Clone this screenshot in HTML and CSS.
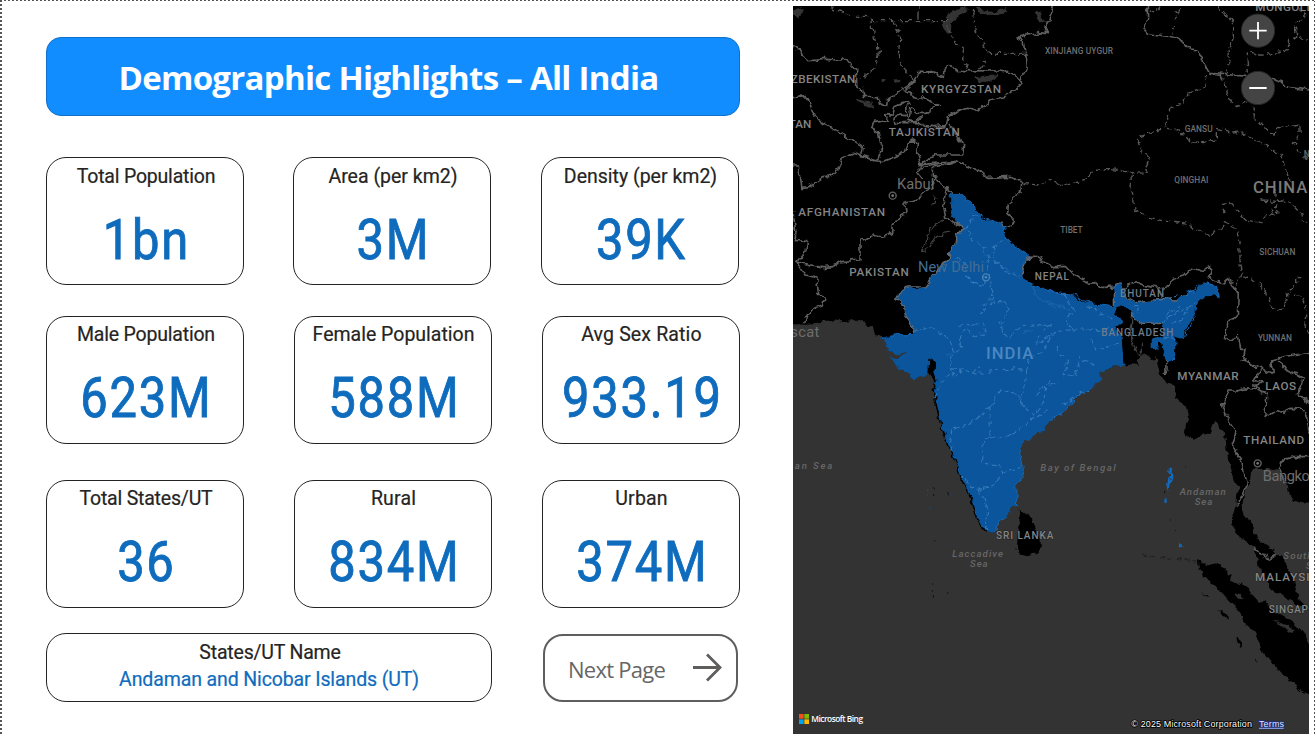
FILE: index.html
```html
<!DOCTYPE html>
<html lang="en">
<head>
<meta charset="utf-8">
<title>Demographic Highlights – All India</title>
<link rel="stylesheet" href="styles.css">
</head>
<body>
<main class="report">
  <section class="summary">
    <h1 class="banner">Demographic Highlights – All India</h1>
    <div class="row row-first">
      <article class="card"><h2 class="label tight">Total Population</h2><p class="value">1bn</p></article>
      <article class="card"><h2 class="label">Area (per km2)</h2><p class="value">3M</p></article>
      <article class="card"><h2 class="label">Density (per km2)</h2><p class="value">39K</p></article>
    </div>
    <div class="row row-second">
      <article class="card"><h2 class="label tight">Male Population</h2><p class="value">623M</p></article>
      <article class="card"><h2 class="label">Female Population</h2><p class="value">588M</p></article>
      <article class="card"><h2 class="label loose">Avg Sex Ratio</h2><p class="value">933.19</p></article>
    </div>
    <div class="row row-third">
      <article class="card"><h2 class="label tight">Total States/UT</h2><p class="value">36</p></article>
      <article class="card"><h2 class="label loose">Rural</h2><p class="value">834M</p></article>
      <article class="card"><h2 class="label loose">Urban</h2><p class="value">374M</p></article>
    </div>
    <div class="row row-last">
      <article class="card name-card"><h2 class="label tight">States/UT Name</h2><p class="state-name">Andaman and Nicobar Islands (UT)</p></article>
      <button class="next"><span class="next-text">Next Page</span>
        <svg class="arrow" width="30" height="30" viewBox="0 0 30 30"><path d="M1 14.500H28M15 1.500L28 14.500L15 27.500"/></svg>
      </button>
    </div>
  </section>
  <section class="map">
    <svg class="map-canvas" width="516" height="728" viewBox="9 18 1548 2184">
      <defs>
        <filter id="coast" filterUnits="userSpaceOnUse" x="-40" y="-40" width="1660" height="2300" color-interpolation-filters="sRGB">
          <feTurbulence type="fractalNoise" baseFrequency="0.045" numOctaves="2" seed="4"/>
          <feDisplacementMap in="SourceGraphic" scale="22" xChannelSelector="R" yChannelSelector="G"/>
        </filter>
      </defs>
      <g class="terrain" filter="url(#coast)">
      <rect class="land" x="-40" y="-40" width="1660" height="2300"/>
      <path class="sea" d="M-40 970L50 974L80 972L120 960L150 964L200 960L215 954L228 972L250 980L255 1005L285 1012L380 1060L560 1320L800 1180L940 1105L980 1098L1005 1100L1020 1092L1040 1094L1055 1068L1072 1060L1082 1080L1100 1075L1110 1125L1125 1135L1130 1150L1155 1160L1158 1190L1168 1205L1180 1205L1190 1230L1194 1255L1187 1275L1185 1315L1205 1310L1222 1317L1260 1295L1268 1275L1280 1266L1288 1285L1304 1290L1310 1350L1325 1410L1333 1450L1345 1460L1340 1505L1325 1560L1328 1590L1360 1620L1395 1648L1402 1690L1425 1730L1435 1765L1475 1785L1557 1830H1620V2260H-40Z"/>
      <path class="sea" d="M1390 1406L1450 1412L1475 1410L1488 1440L1493 1475L1510 1500L1530 1506L1620 1512V1835L1560 1835L1530 1800L1518 1770L1510 1730L1488 1690L1465 1665L1445 1648L1410 1625L1395 1600L1385 1560L1362 1555L1356 1520L1362 1490L1380 1450L1382 1420Z"/>
      <path class="land" d="M1221 1684L1250 1692L1295 1696L1325 1727L1323 1739L1355 1752L1390 1782L1405 1805L1425 1802L1440 1825L1470 1842L1500 1855L1515 1873L1540 1895L1560 1940H1600V2100L1540 2075L1520 2057L1470 2017L1435 1975L1420 1957L1412 1930L1390 1897L1360 1867L1352 1840L1340 1822L1310 1797L1300 1782L1250 1737L1224 1707Z"/>
      <path class="land" d="M1235 1777L1262 1793L1245 1788ZM1284 1829L1298 1828L1313 1847L1312 1856L1302 1848ZM1340 1915L1346 1914L1359 1940L1350 1940L1340 1923ZM1395 1974L1402 1990L1396 1982Z"/>
      <path class="sea" d="M1335 1779L1355 1785L1360 1797L1345 1796ZM1445 1858L1490 1875L1515 1892L1505 1898L1465 1870ZM1530 1880L1540 1874L1545 1890L1535 1893Z"/>
      <path class="land" d="M682 1521L699 1535L710 1538L725 1562L738 1580L748 1608L750 1652L738 1662L712 1669L690 1663L681 1650L683 1610L686 1556L697 1544Z"/>
      <path class="lake" d="M552 234L570 229L628 221L612 238L590 249L567 245ZM455 78L475 40L510 22L535 27L500 50L484 70L483 95L470 98ZM560 24L620 35L650 22L658 28L628 46L600 44L570 40ZM735 40L750 34L765 70L745 62ZM195 300L245 308L256 325L230 314L195 305ZM10 30L35 22L42 30L22 52L10 45ZM278 237H286L284 246H278ZM310 238L322 234L333 244L320 250Z"/>

      <g class="border">
        <path d="M-10 131L20 145L57 182L110 178L150 180L163 173L195 212L200 212V258L216 262L222 292L265 293L268 312L290 320L292 300L370 245L385 218L425 215L460 232L462 208L478 199L510 212L635 213L664 219L690 236L695 254L640 293L600 302L568 333L533 322L510 330L475 350L470 377L430 380L400 376L395 368L315 368L312 355L330 342L345 344L350 315L360 310L355 302L315 320L308 345L285 344L295 362L255 367L245 382L265 397L272 430L280 440L268 464L263 480L215 466L220 440L150 398L73 352L55 300L48 290L-10 294"/>
        <path d="M378 240L343 275L365 281L362 290L395 298L402 290L445 316L410 340L380 340L360 325L352 360L378 366L400 348M-10 495H28L35 562L60 560L95 535L125 528L150 500L157 475L190 460L215 467L262 482L275 485L315 470L345 455L355 430L370 420L385 430L383 465L392 490L440 465L515 465L518 435L500 400L480 375M392 495L430 490L500 485L550 505L578 518L595 535L660 532L695 543L693 575L665 590L668 610L652 615L650 640L673 660L665 680L645 678L634 668"/>
        <path d="M395 540L380 520L392 505L450 490L500 485L470 495L430 500L430 525L445 545L460 560L495 585M792 10L780 60L762 85L775 98L745 95L685 112L703 125L712 200L698 228L695 254"/>
        <path d="M470 560L460 610L467 655L525 683L500 705L495 730M433 520L440 535L425 560L407 565L385 600L345 610L348 638L330 645L310 675L308 700L275 710L250 705L210 728V780L155 785L128 800L100 803L20 785M9 635L18 700L15 718L50 722L45 755L20 785L45 825L80 835L86 880L103 895L97 915L70 925L50 950L44 970"/>
        <path d="M692 790L715 768L740 770L790 800L830 800L850 822L895 850L920 848L935 862L978 861L990 852L1000 870L1035 845L1060 855L1100 865L1130 860L1150 835L1180 825L1200 805L1235 810L1255 800L1267 812L1258 835L1275 842L1300 848L1310 838L1325 850L1335 870L1345 880L1342 945L1315 970L1302 1010L1325 1020L1345 1010L1352 1048L1365 1048L1360 1080L1380 1090L1395 1106M1445 1110L1442 1080L1480 1070L1510 1065L1570 1055M1000 885L1035 905M1108 875L1120 895"/>
        <path d="M1130 1080L1131 1110L1125 1120M1355 1078L1390 1093L1415 1106L1395 1140L1415 1150L1400 1155L1400 1165L1355 1168L1338 1173L1318 1173L1295 1215L1305 1240L1340 1293L1325 1340L1355 1382L1373 1460L1338 1520M1390 1150L1410 1170L1430 1180L1428 1245L1425 1255L1460 1228L1485 1240L1500 1225L1535 1228L1550 1250L1557 1295M1465 1080L1485 1108L1520 1125L1540 1135L1525 1180L1570 1214M1570 1370H1510L1485 1378L1470 1403L1485 1450M1445 1080L1450 1120L1410 1105M1390 1645L1400 1650L1420 1660L1430 1680L1448 1670L1460 1660"/>
        <path d="M1072 10L1073 60L1062 85L1072 100L1150 112L1185 130L1200 147L1225 150L1240 185L1260 220L1325 225L1370 229L1430 232L1460 242L1500 260L1545 265L1570 275M790 10L785 40"/>
        <path class="river-line" d="M432 585L438 590L435 610L420 612M394 755L410 730L420 685L465 660M394 755L410 753L440 710L480 695M1025 960V1020L1050 1070L1060 1060V1030M1028 940L1025 965L1015 1010"/>
      </g>

      <g class="province">
        <path d="M120 20L180 48L240 50L250 100L268 160L255 205L210 235M245 62H483M384 10V62M305 62L330 100L325 170L340 205L370 240M553 30L550 70L570 115L600 160H710M470 80L490 120L520 150L518 180L540 210M570 210L585 190L580 180M700 550L740 555L785 540L800 550"/>
        <path d="M1080 25L1100 35L1110 20M1170 25L1155 50L1145 105M1280 22L1305 40L1330 70L1330 110L1315 150L1312 220M1368 155L1375 215M1380 155L1405 165L1440 165L1490 150L1500 120L1520 110L1515 80L1530 60L1548 38L1525 28M1520 85L1535 120H1557"/>
        <path d="M1250 225L1248 255L1230 270L1200 280L1180 310L1140 325L1130 370L1120 385L1050 410L1045 425L1055 450L1080 475L1065 500L1072 520L1030 518L960 508L910 515L895 535L820 555L780 540M1125 385L1160 390L1165 400L1190 402L1200 425L1240 428L1275 420L1282 410V385L1325 400L1350 395L1410 430L1470 460L1480 490L1490 520L1500 545M1290 225L1305 245L1315 295L1340 320L1375 305M1390 320L1388 350L1450 405L1465 385L1530 375L1530 400L1510 430L1525 455L1557 475"/>
        <path d="M1025 520L1020 560L1030 590L1035 630L1060 645L1120 660L1200 670L1225 695L1260 707L1290 690L1300 665L1335 680L1350 720L1350 780L1358 820L1340 855L1320 840M1302 640L1298 610L1320 607L1340 630L1370 660L1410 668L1435 640L1455 645L1440 630M1360 835L1380 830L1425 870L1440 920L1470 930L1490 900L1490 880L1520 850L1520 830L1540 830M1515 885L1540 890L1548 920L1545 980L1557 1000M1415 600L1470 605L1495 600L1535 640L1540 660L1565 672M1455 570V590L1470 610L1450 625L1465 640"/>
        <path class="faint" d="M1055 1665L1150 1677L1220 1686"/>
      </g>

      <path class="india-shore" d="M425 1080L428 1110L440 1145L432 1170L440 1210L455 1280L470 1325L495 1380L510 1430L540 1485L560 1550L575 1580L595 1595"/>
      <path class="india" d="M275 1020L295 1005L345 1002L372 1002L375 985L360 970L345 945L343 925L340 915L320 900L335 875L355 858L368 867L410 858L430 825L460 790L480 775L475 760L500 730L500 705L525 688L505 670L482 650L487 630L475 610L485 600L475 588L492 578L520 590L550 615L565 640L580 655L605 660L625 670L640 675L648 720L680 740L720 768L700 795L692 830L730 852L790 877L810 878L845 882L855 895L910 912L970 920L970 865L995 855L1000 885L1030 905L1110 898L1165 900L1190 875L1220 865L1240 848L1280 862L1288 892L1270 882L1245 892L1218 915L1217 945L1200 965L1190 985L1182 1020L1157 1010L1155 1060L1150 1080L1135 1088L1125 1070L1120 1030L1108 1028L1098 1052L1082 1040L1082 1020L1115 1005L1125 972L1035 965L1028 940L1025 928L985 922L972 940L1002 965L972 980L995 1015L1001 1098L992 1102L980 1098L950 1103L930 1115L934 1135L900 1170L860 1190L830 1230L780 1262L770 1275L765 1292L735 1298L718 1320L700 1317L690 1345L700 1405L695 1435L680 1460L683 1515L662 1520L655 1550L625 1570L615 1590L595 1595L575 1580L560 1550L540 1485L510 1430L495 1380L470 1325L455 1280L440 1210L432 1170L440 1145L430 1105L435 1082L422 1079L418 1115L400 1130L370 1138L345 1120L300 1075L325 1078L355 1055L318 1063L295 1050L285 1020Z"/>
      <path class="india-shore" d="M425 1082L433 1086L431 1105L423 1100ZM430 1120L439 1145"/>
      <path class="india-edge" d="M492 578L520 590L550 615L565 640L605 660L640 675L648 720L680 740L720 768M730 852L790 877L845 882L910 912L970 920M970 865L995 855M1190 875L1240 848L1280 862L1288 892M1217 945L1182 1020M1155 1060L1150 1080M295 1005H370M683 1515L680 1460L695 1435L700 1405L690 1345M615 1590L625 1570L655 1550M860 1190L830 1230L780 1262"/>
      <path class="india-rim" d="M372 1002L375 985L345 945L340 915L320 900L335 875L355 858L410 858L430 825L480 775L475 760L500 730L500 705L525 688L505 670M720 768L700 795L692 830M1035 905L1110 898L1165 900M1125 972L1035 965L1025 928M970 915V870"/>
      <path class="state" d="M525 688L540 670L545 650L575 645M530 690L560 725L585 755L600 770L590 790L600 830L605 870M585 750L610 735L640 725M610 735L615 785L650 815L690 830M500 775L525 785L530 830L560 855L580 860L585 825M565 945L605 910L650 905L655 940L630 970L635 1000L660 1010L695 980L780 975M605 870V900L570 920M375 990L420 985L470 1010L490 1050L480 1100L490 1130L520 1105L540 1120L570 1100M505 980L520 975L580 970L590 1000L555 1010L535 985L508 1010L512 1045L495 1060M535 830L570 860M480 1105L560 1122L625 1108L710 1110L720 1070L760 1050L790 1000L740 1035L745 1010L790 965M710 1110L705 1165L690 1210M430 1190L465 1135L490 1115M600 1220L630 1170L680 1180L695 1210L730 1245L765 1200L770 1160L800 1145M600 1220L560 1260L485 1290L480 1350M600 1220L600 1310L580 1320L578 1390L630 1395L635 1430L600 1460L565 1470L510 1430M600 1315L650 1310L700 1280L735 1250L780 1230M635 1420L690 1405M565 1470L580 1500L592 1530V1590M780 1000L830 990L900 990L960 985M800 1040L830 1080L820 1130L860 1120L870 1070L920 1100M820 880L850 930L830 960L850 995M900 1020L920 1050L980 1030M890 920L970 955M1030 920H1050L1028 950M1130 955L1190 925L1215 905M1120 970L1130 945L1140 930L1170 925M870 1180L900 1170M740 1190L780 1140M820 1215L870 1180M1120 1010L1155 1020M1145 970L1180 955L1195 930M1105 900L1180 885L1215 870"/>
      <path class="river" d="M725 850L740 890L775 907L800 925M640 800L690 835M780 905L840 930M495 1055L470 1065M700 1000L730 990"/>
      <path class="islands" d="M1143 1400L1140 1430M1139 1430L1133 1468M1127 1498L1126 1508M1171 1627L1174 1639"/>
      </g>
      <path class="atolls" d="M411 1470H415M480 1481L483 1484M419 1524H422M412 1485H414"/>
      <path class="islets" d="M430 1462L434 1468M431 1482V1488M473 1476L476 1486M434 1620V1624M430 1785V1793M427 1770V1775M473 1777V1782M426 1752H430M1185 1400H1188M1140 1560H1143M676 1645L680 1650M1124 1472V1480M1157 1590V1593"/>
      <g class="pin">
        <circle cx="308" cy="587" r="10.500"/><circle class="pin-dot" cx="308" cy="587" r="4"/>
        <circle cx="1403" cy="1390" r="10.500"/><circle class="pin-dot" cx="1403" cy="1390" r="4"/>
      </g>
      <g class="pin pin-blue"><circle cx="588" cy="832" r="10.500"/><circle class="pin-dot" cx="588" cy="832" r="4"/></g>

      <g class="country">
        <text x="-22" y="249" textLength="218">UZBEKISTAN</text>
        <text class="trail" x="64" y="384">TURKMENISTAN</text>
        <text x="393" y="279" textLength="240">KYRGYZSTAN</text>
        <text x="296" y="409" textLength="213">TAJIKISTAN</text>
        <text x="25" y="648" textLength="260">AFGHANISTAN</text>
        <text x="178" y="827" textLength="178">PAKISTAN</text>
        <text class="c-small" x="734" y="841" textLength="103">NEPAL</text>
        <text class="c-small c-blend" x="990" y="892" textLength="132">BHUTAN</text>
        <text class="c-small c-blend" x="934" y="1008" textLength="216">BANGLADESH</text>
        <text x="1162" y="1141" textLength="184">MYANMAR</text>
        <text x="1426" y="1171" textLength="92">LAOS</text>
        <text x="1360" y="1332" textLength="182">THAILAND</text>
        <text class="c-small" x="618" y="1616" textLength="172">SRI LANKA</text>
        <text x="1395" y="1743" textLength="190">MALAYSIA</text>
        <text class="c-small" x="1436" y="1838" textLength="180">SINGAPORE</text>
        <text x="1396" y="33" textLength="188">MONGOLIA</text>
      </g>
      <text class="china" x="1389" y="579" textLength="163">CHINA</text>
      <text class="india-text" x="588" y="1078" textLength="142">INDIA</text>
      <g class="region">
        <text x="765" y="162" textLength="204">XINJIANG UYGUR</text>
        <text x="1184" y="396" textLength="84">GANSU</text>
        <text x="1153" y="550" textLength="102">QINGHAI</text>
        <text x="811" y="698" textLength="67">TIBET</text>
        <text x="1408" y="765" textLength="108">SICHUAN</text>
        <text x="1404" y="1024" textLength="102">YUNNAN</text>
        <text x="1541" y="470">NINGXIA</text>
      </g>
      <g class="city">
        <text x="321" y="568" textLength="112">Kabul</text>
        <text class="trail" x="89" y="1012">Muscat</text>
        <text x="1418" y="1442" textLength="163">Bangkok</text>
        <text class="delhi" x="384" y="815" textLength="198">New Delhi</text>
      </g>
      <g class="water">
        <text x="-79" y="1406" textLength="206">Arabian Sea</text>
        <text x="751" y="1412" textLength="226">Bay of Bengal</text>
        <text x="1169" y="1485" textLength="138">Andaman</text>
        <text x="1214" y="1515" textLength="53">Sea</text>
        <text x="487" y="1670" textLength="152">Laccadive</text>
        <text x="540" y="1701" textLength="53">Sea</text>
        <text x="1480" y="1676" textLength="188">South China</text>
        <text x="1548" y="1707">Sea</text>
      </g>
      <g class="brand">
        <rect class="logo-red" x="27" y="2142" width="14" height="14"/><rect class="logo-green" x="43" y="2142" width="14" height="14"/>
        <rect class="logo-blue" x="27" y="2158" width="14" height="14"/><rect class="logo-yellow" x="43" y="2158" width="14" height="14"/>
        <text x="64" y="2166" textLength="155">Microsoft Bing</text>
      </g>
      <g class="credit">
        <text x="1024" y="2180" textLength="362">© 2025 Microsoft Corporation</text>
        <text class="terms" x="1407" y="2180" textLength="75">Terms</text>
        <path d="M1407 2185H1481"/>
      </g>
      <g class="zoom">
        <circle cx="1404" cy="92" r="50"/><circle cx="1404" cy="264" r="50"/>
        <path d="M1378 92H1430M1404 66V118M1378 264H1430"/>
      </g>
    </svg>
  </section>
</main>
</body>
</html>
```
FILE: styles.css
```css
* { box-sizing: border-box; }
html, body { margin: 0; height: 734px; overflow: hidden; background: #fff; }
h1, h2, p { margin: 0; font-weight: normal; }

.report {
  display: flex;
  width: 1315px;
  height: 734px;
  padding: 6px 6px 0 46px;
  justify-content: space-between;
  background:
    repeating-linear-gradient(90deg, #555 0 2px, #fff 2px 4px) 0 0 / 100% 1px no-repeat,
    repeating-linear-gradient(180deg, #555 0 2px, #fff 2px 4px) 0 0 / 2px 100% no-repeat,
    repeating-linear-gradient(180deg, #555 0 2px, #fff 2px 4px) 100% 0 / 1px 100% no-repeat,
    #fff;
}
.summary { width: 695px; padding-top: 31px; }

.banner {
  display: flex;
  align-items: center;
  justify-content: center;
  width: 694px;
  height: 79px;
  padding: 2px 9px 0 0;
  border: 1px solid #1070cb;
  border-radius: 15px;
  background: #118dff;
  color: #fff;
  font: 700 33px/40px "Open Sans", "Noto Sans", sans-serif;
  letter-spacing: -0.7px;
}

.row { display: flex; gap: 50px; }
.row-first { padding-top: 41px; gap: 49.5px; }
.row-second { padding-top: 31px; }
.row-third { padding-top: 36px; }
.row-last { padding-top: 25px; gap: 51px; }
.row .card:nth-child(2) { margin-left: -0.5px; }

.card {
  width: 198px;
  height: 128px;
  flex: none;
  padding-top: 7px;
  border: 1px solid #252423;
  border-radius: 20px;
  text-align: center;
  font-family: Roboto, sans-serif;
}
.label {
  padding-left: 2px;
  color: #252423;
  font-size: 19.5px;
  line-height: 23px;
  letter-spacing: 0;
  white-space: nowrap;
  -webkit-text-stroke: 0.2px #252423;
}
.row-second .label, .row-third .label { margin-top: -1px; margin-bottom: 1px; }
.tight { letter-spacing: -0.2px; }
.loose { letter-spacing: 0.15px; }
.value {
  margin-top: 20px;
  padding-left: 3px;
  color: #0f6cbd;
  font-size: 55px;
  line-height: 64px;
  letter-spacing: 1.9px;
  transform: scaleX(0.89);
  -webkit-text-stroke: 0.9px #0f6cbd;
}

.name-card { width: 446px; height: 69px; }
.state-name { margin-top: 4px; color: #0f6cbd; font-size: 19.5px; line-height: 23px; letter-spacing: -0.12px; -webkit-text-stroke: 0.2px #0f6cbd; }

.next {
  display: flex;
  align-items: center;
  justify-content: space-between;
  width: 195px;
  height: 68px;
  padding: 0 14px 0 23px;
  margin-top: 1px;
  border: 2px solid #605e5c;
  border-radius: 20px;
  background: #fff;
}
.next-text { padding-top: 1px; color: #666; font: 22px/30px "Open Sans", sans-serif; letter-spacing: -0.75px; white-space: nowrap; }
.arrow { fill: none; stroke: #605e5c; stroke-width: 2.8; }

.map { width: 516px; height: 728px; background: #333; }
.map-canvas { display: block; font-family: Roboto, sans-serif; }
.land { fill: #000; }
.sea, .lake { fill: #333; }
.border { fill: none; stroke: #606060; stroke-width: 4.8; stroke-linejoin: round; }
.river-line { stroke: #444; stroke-width: 3.5; }
.province { fill: none; stroke: #5a5a5a; stroke-width: 4; stroke-dasharray: 17 9; stroke-linejoin: round; }
.faint { stroke: #202020; stroke-width: 3; }
.india { fill: #0a559b; }
.india-shore { fill: none; stroke: #000; stroke-width: 8; }
.india-edge { fill: none; stroke: #1769b8; stroke-width: 3; }
.india-rim { fill: none; stroke: #646b72; stroke-width: 4; }
.state { fill: none; stroke: #3579b9; stroke-width: 3.4; stroke-dasharray: 15 8; stroke-linejoin: round; }
.river { fill: none; stroke: #1c66ab; stroke-width: 3; }
.islands { fill: none; stroke: #116bbf; stroke-width: 7; }
.atolls { fill: none; stroke: #11589b; stroke-width: 3; }
.islets { fill: none; stroke: #111; stroke-width: 3; }

.pin { fill: none; stroke: #666; stroke-width: 4; }
.pin-dot { fill: #777; stroke: none; }
.pin-blue { stroke: #4b83b5; }
.pin-blue .pin-dot { fill: #4b83b5; }

.country { fill: #858585; font-size: 35px; font-weight: 500; stroke: #000; stroke-width: 3; paint-order: stroke; stroke-opacity: 0.4; }
.c-small { font-size: 30px; }
.c-blend { fill: #6f7d8b; stroke-opacity: 0; }
.trail { text-anchor: end; }
.china { fill: #7a7a7a; font-size: 50px; font-weight: 500; }
.india-text { fill: #4a87c2; font-size: 50px; font-weight: 500; }
.region { fill: #6f6f6f; font-size: 25px; font-weight: 500; }
.city { fill: #6e6e6e; font-size: 44px; }
.city .trail { letter-spacing: 1px; }
.delhi { fill: #426d95; }
.water { fill: #676767; font-size: 29px; font-style: italic; font-weight: 500; }
.brand { fill: #fff; font-family: "Open Sans", sans-serif; font-size: 25px; font-weight: 600; }
.logo-red { fill: #f25022; }
.logo-green { fill: #7fba00; }
.logo-blue { fill: #00a4ef; }
.logo-yellow { fill: #ffb900; }
.credit { fill: #fff; stroke: #000; stroke-width: 5; paint-order: stroke; font: 27px "Liberation Sans", sans-serif; }
.credit path { stroke: #8fa9ff; stroke-width: 3; }
.credit .terms { fill: #dfe6ff; stroke: #1c2e80; }
.zoom circle { fill: #444; stroke: #252525; stroke-width: 3; }
.zoom path { fill: none; stroke: #fff; stroke-width: 5.5; }
```
